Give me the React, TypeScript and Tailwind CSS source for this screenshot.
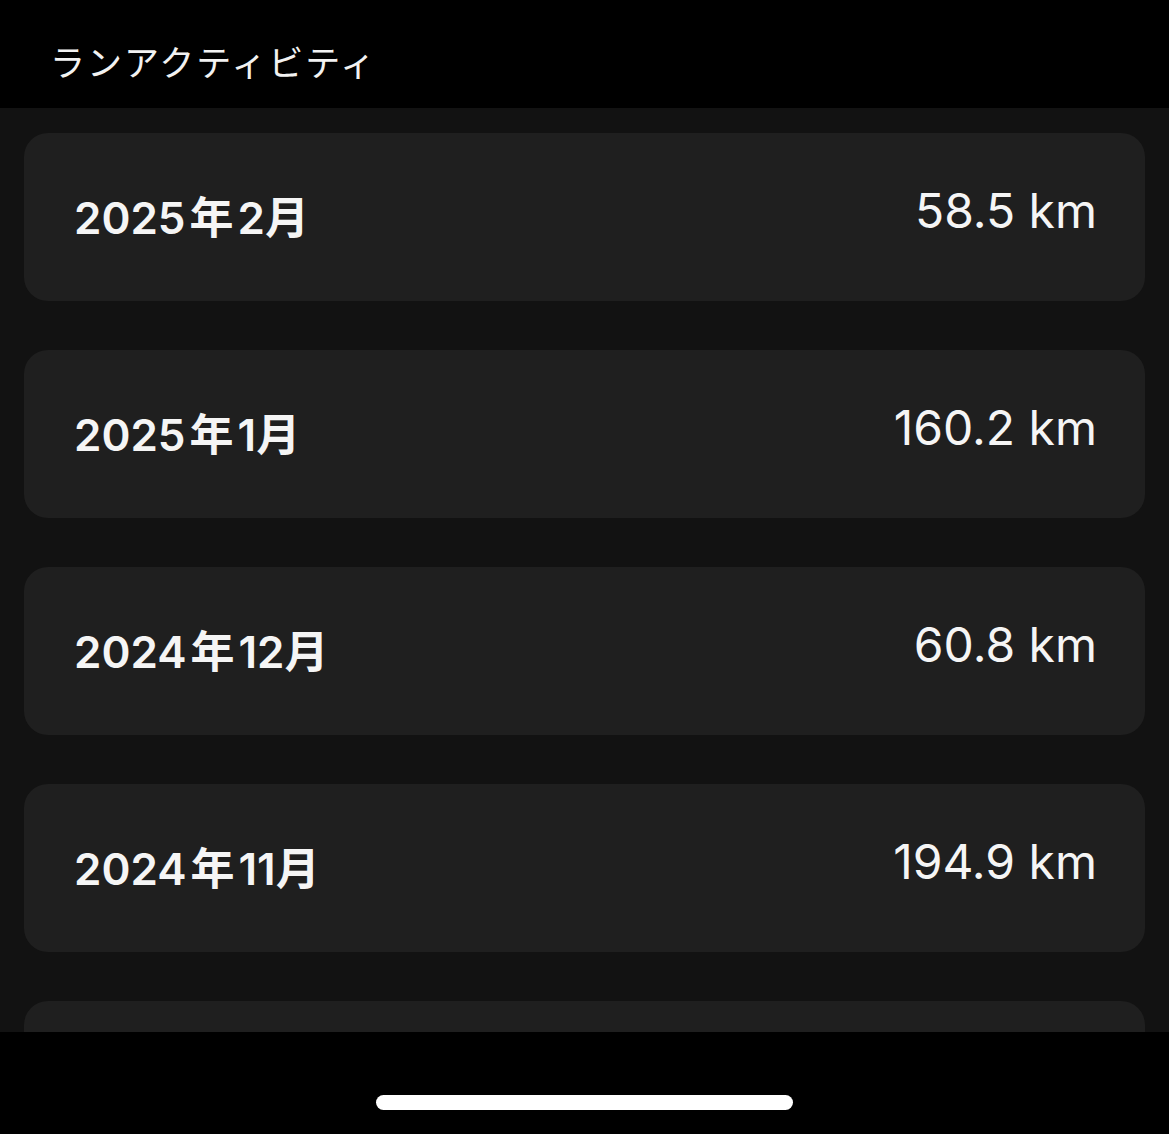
const months = [
  { year: "2025", month: "2", km: "58.5 km" },
  { year: "2025", month: "1", km: "160.2 km" },
  { year: "2024", month: "12", km: "60.8 km" },
  { year: "2024", month: "11", km: "194.9 km" },
];

export default function App() {
  return (
    <div className="flex h-[1134px] w-full flex-col overflow-hidden bg-black font-['Inter','Noto_Sans_CJK_JP',sans-serif] text-white">
      {/* Header */}
      <header className="flex h-[108px] shrink-0 items-center pl-[50px] pt-[14px]">
        <h1 className="font-['Noto_Sans_CJK_JP',sans-serif] text-[35px] font-normal tracking-[2px] text-[#f2f2f2]">
          ランアクティビティ
        </h1>
      </header>

      {/* Monthly list */}
      <main className="flex flex-1 flex-col gap-[49px] overflow-hidden bg-[#121212] px-[24px] pt-[25px]">
        {months.map((m) => (
          <div
            key={m.year + m.month}
            className="flex h-[168px] shrink-0 items-center justify-between rounded-[24px] bg-[#1f1f1f] pl-[50px] pr-[48px]"
          >
            <span className="mt-[2px] text-[44px] font-semibold text-[#f5f5f5]">
              {m.year}
              <span className="mx-[4px]">年</span>
              {m.month}月
            </span>
            <span className="mb-[12px] text-[48px] font-normal text-[#f5f5f5]">{m.km}</span>
          </div>
        ))}
        {/* next month, scrolled below the fold */}
        <div className="h-[168px] shrink-0 rounded-[24px] bg-[#1f1f1f]" />
      </main>

      {/* Home indicator */}
      <footer className="flex h-[102px] shrink-0 items-start justify-center pt-[63px]">
        <div className="h-[15px] w-[417px] rounded-full bg-white" />
      </footer>
    </div>
  );
}
